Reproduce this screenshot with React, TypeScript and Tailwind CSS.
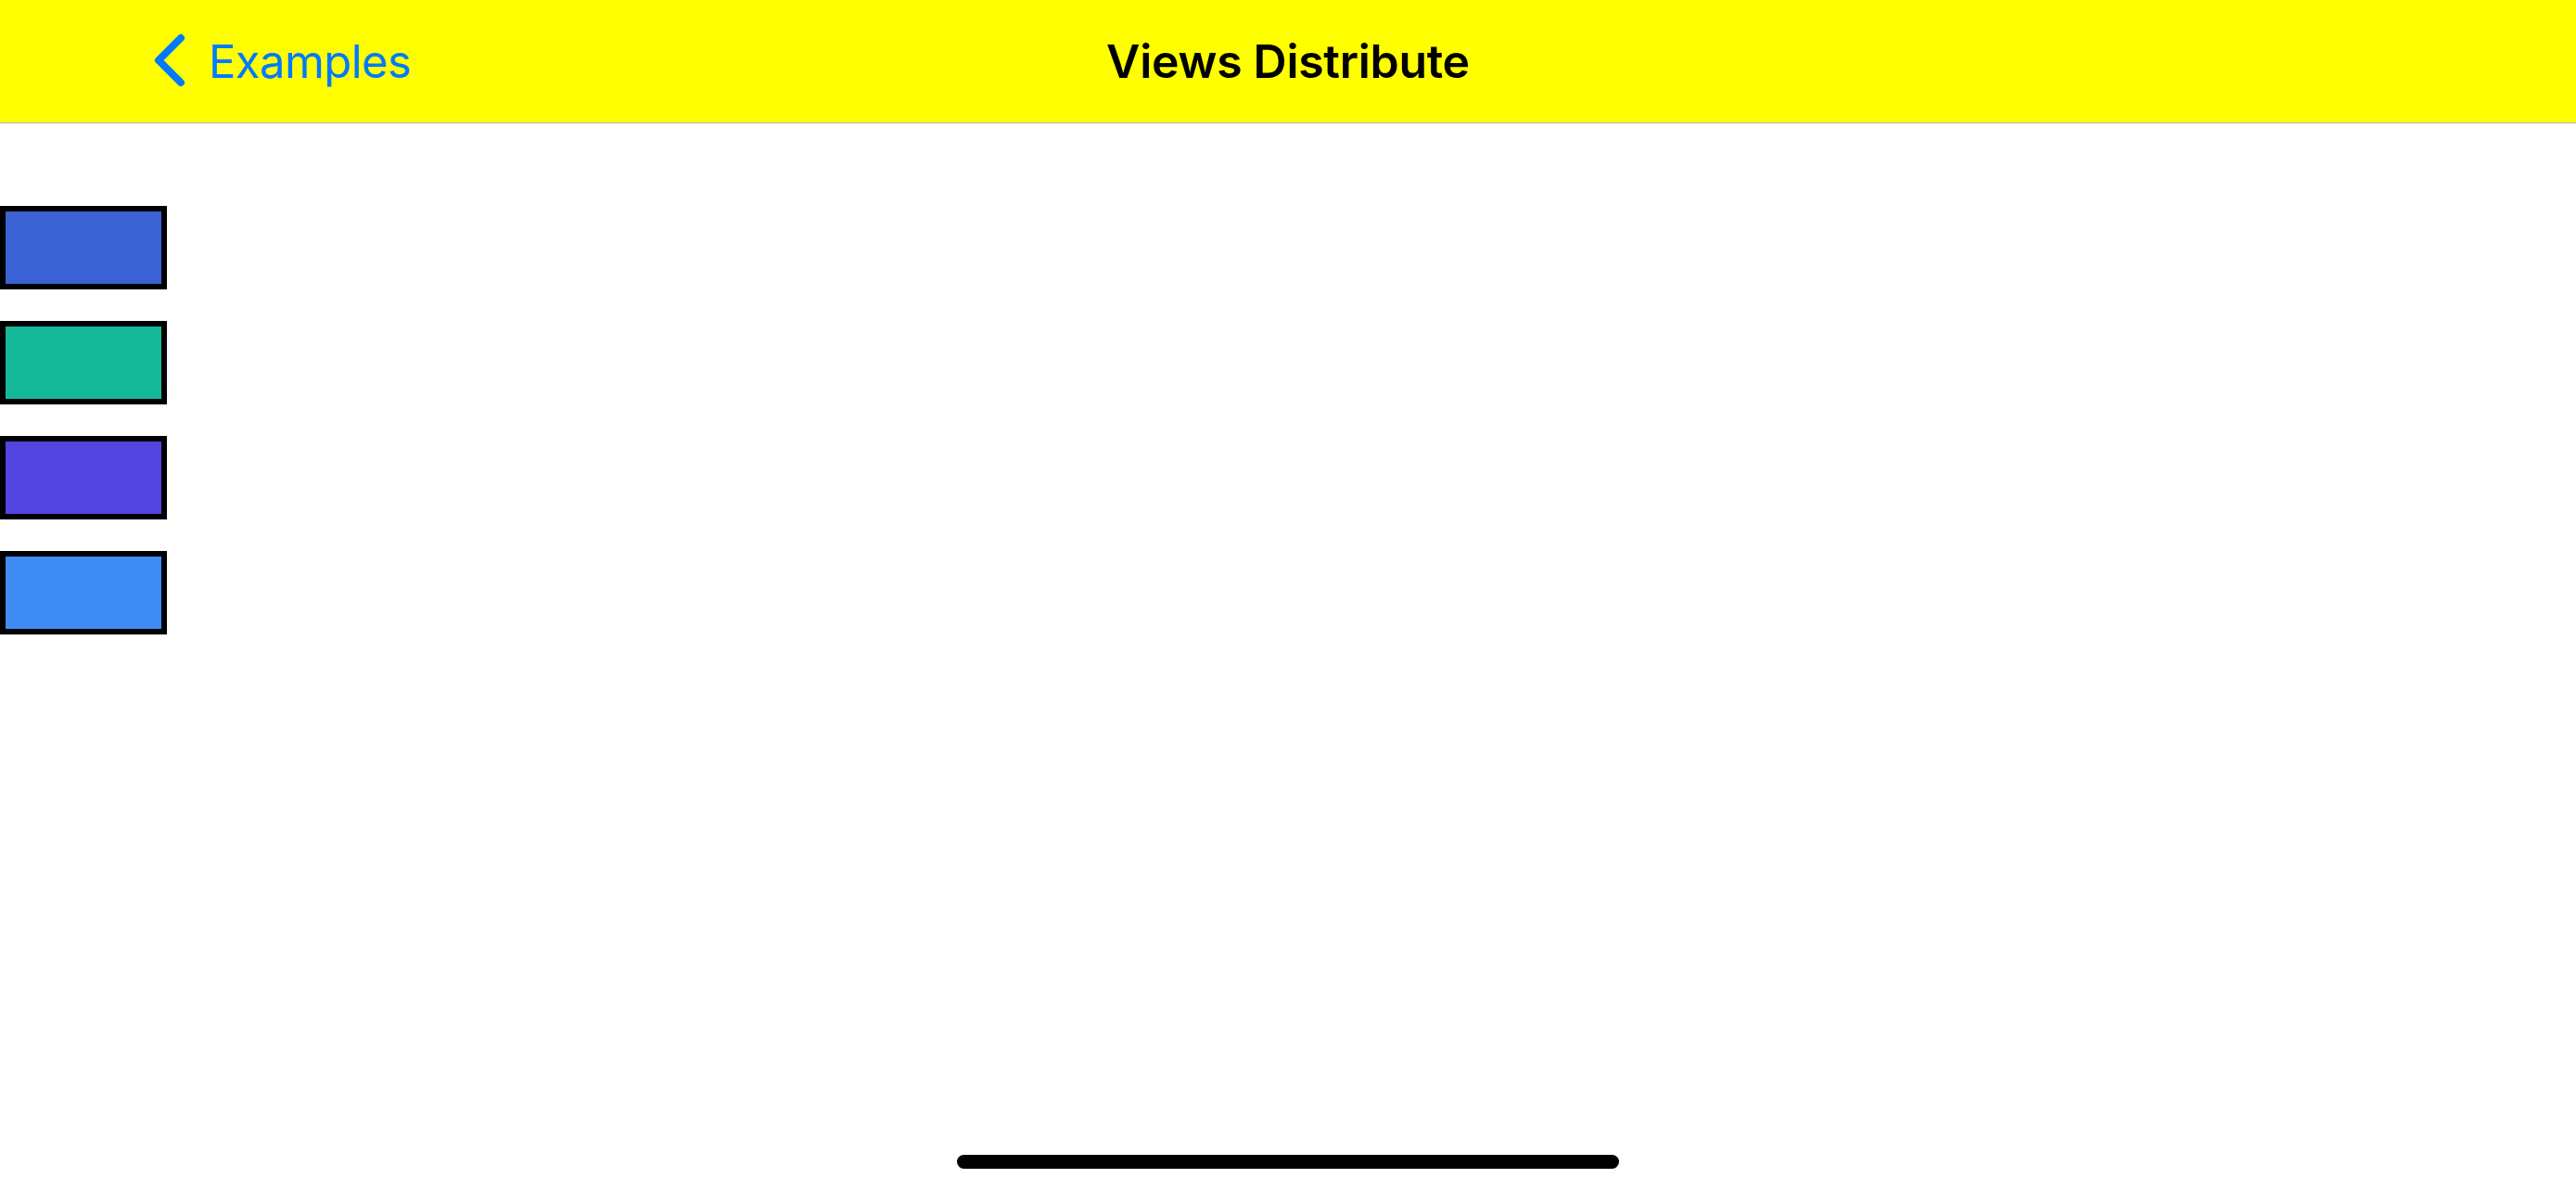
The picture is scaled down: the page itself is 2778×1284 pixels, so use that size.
const boxes = ['#3b62d4', '#16b89a', '#5444e0', '#3e8cf3'];

function BackChevron() {
  return (
    <svg width="40" height="62" viewBox="0 0 40 62" className="shrink-0">
      <polyline
        points="32,6 8,30 32,54"
        fill="none"
        stroke="#007aff"
        strokeWidth="8"
        strokeLinecap="round"
        strokeLinejoin="round"
      />
    </svg>
  );
}

export default function App() {
  return (
    <div
      className="relative flex min-h-screen w-full flex-col bg-white"
      style={{ fontFamily: 'Inter, "Noto Sans", "Liberation Sans", sans-serif' }}
    >
      <header className="grid h-[133px] grid-cols-[1fr_auto_1fr] items-center border-b border-[#b2b2b2] bg-[#ffff00]">
        <div className="flex items-center pl-[163px]">
          <BackChevron />
          <span className="ml-[22px] text-[49px] leading-none tracking-[-0.6px] text-[#007aff]">Examples</span>
        </div>
        <h1 className="text-[50px] font-semibold leading-none tracking-[-0.3px] text-black">Views Distribute</h1>
        <div />
      </header>

      <main className="flex flex-col gap-[34px] pt-[89px]">
        {boxes.map((color) => (
          <div
            key={color}
            className="h-[90px] w-[180px] border-[6px] border-black"
            style={{ backgroundColor: color }}
          />
        ))}
      </main>

      <div className="mt-auto flex justify-center pb-[24px]">
        <div className="h-[15px] w-[714px] rounded-full bg-black" />
      </div>
    </div>
  );
}
